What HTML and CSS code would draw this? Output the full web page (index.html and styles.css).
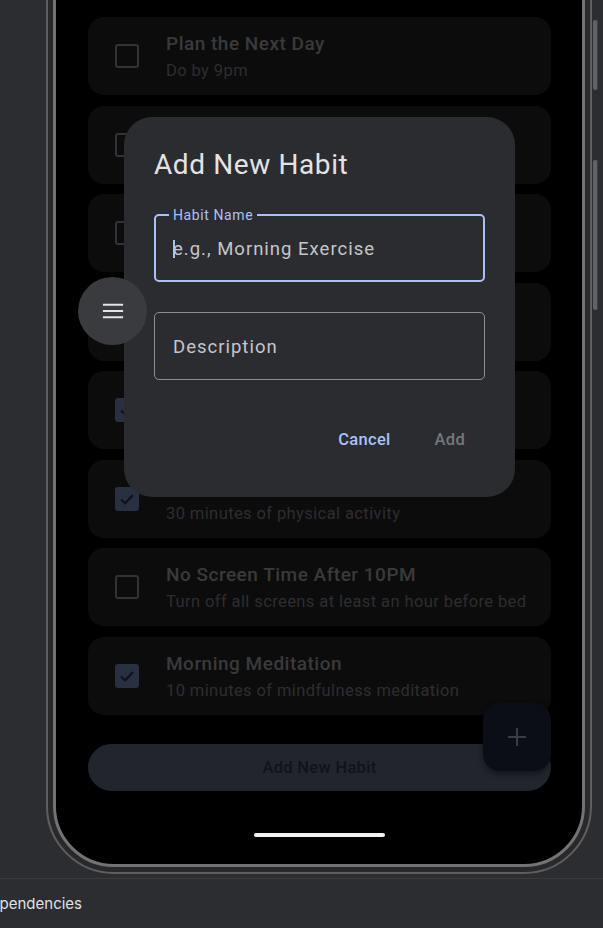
FILE: index.html
```html
<!DOCTYPE html>
<html lang="en">
<head>
<meta charset="utf-8">
<title>Add New Habit</title>
<link rel="stylesheet" href="styles.css">
</head>
<body>
<div class="ide">
  <div class="phone">
    <span class="side-btn side-btn-1"></span>
    <span class="side-btn side-btn-2"></span>
    <div class="bezel">
      <div class="screen">
        <ul class="habits">
          <li class="habit">
            <span class="check"></span>
            <div class="habit-text"><div class="habit-title">Plan the Next Day</div><div class="habit-desc">Do by 9pm</div></div>
          </li>
          <li class="habit">
            <span class="check"></span>
            <div class="habit-text"><div class="habit-title">Drink Water</div><div class="habit-desc">8 glasses throughout the day</div></div>
          </li>
          <li class="habit">
            <span class="check"></span>
            <div class="habit-text"><div class="habit-title">Read a Book</div><div class="habit-desc">Read at least 20 pages</div></div>
          </li>
          <li class="habit">
            <span class="check"></span>
            <div class="habit-text"><div class="habit-title">Journal</div><div class="habit-desc">Write down three good things</div></div>
          </li>
          <li class="habit">
            <span class="check checked"><svg viewBox="0 0 24 24" width="24" height="24"><path d="M6 12.5l4 4 8-8.5" fill="none" stroke="#0e121b" stroke-width="2.2"/></svg></span>
            <div class="habit-text"><div class="habit-title">Healthy Breakfast</div><div class="habit-desc">Start the day with a good meal</div></div>
          </li>
          <li class="habit">
            <span class="check checked"><svg viewBox="0 0 24 24" width="24" height="24"><path d="M6 12.5l4 4 8-8.5" fill="none" stroke="#0e121b" stroke-width="2.2"/></svg></span>
            <div class="habit-text"><div class="habit-title">Exercise</div><div class="habit-desc">30 minutes of physical activity</div></div>
          </li>
          <li class="habit">
            <span class="check"></span>
            <div class="habit-text"><div class="habit-title">No Screen Time After 10PM</div><div class="habit-desc">Turn off all screens at least an hour before bed</div></div>
          </li>
          <li class="habit">
            <span class="check checked"><svg viewBox="0 0 24 24" width="24" height="24"><path d="M6 12.5l4 4 8-8.5" fill="none" stroke="#0e121b" stroke-width="2.2"/></svg></span>
            <div class="habit-text"><div class="habit-title">Morning Meditation</div><div class="habit-desc">10 minutes of mindfulness meditation</div></div>
          </li>
        </ul>
        <button class="add-btn">Add New Habit</button>
        <div class="home-bar"></div>
      </div>

      <button class="fab" aria-label="Add">
        <svg viewBox="0 0 24 24" width="24" height="24"><path d="M12 3v18M3 12h18" fill="none" stroke="#3a3d45" stroke-width="2"/></svg>
      </button>

      <div class="dialog">
        <div class="dialog-title">Add New Habit</div>
        <div class="field field-focused">
          <span class="field-label">Habit Name</span>
          <span class="cursor"></span>
          <span class="field-text">e.g., Morning Exercise</span>
        </div>
        <div class="field field-idle">
          <span class="field-text">Description</span>
        </div>
        <div class="dialog-actions">
          <button class="text-btn btn-cancel">Cancel</button>
          <button class="text-btn btn-add">Add</button>
        </div>
      </div>

      <button class="menu-btn" aria-label="Menu">
        <svg viewBox="0 0 24 24" width="24" height="24"><path d="M1 5.3h22M1 12h22M1 18.7h22" fill="none" stroke="#e4e4e6" stroke-width="2.2"/></svg>
      </button>
    </div>
  </div>
</div>
<div class="statusbar"><span class="tab-label">Dependencies</span></div>
</body>
</html>
```

FILE: styles.css
```css
html, body {
  margin: 0;
  padding: 0;
}
body {
  width: 603px;
  height: 928px;
  overflow: hidden;
  background: #2b2d30;
  font-family: Roboto, "Noto Sans", sans-serif;
}

.ide {
  height: 878px;
  display: flex;
  align-items: flex-start;
  overflow: hidden;
  background: #2b2d30;
}

.phone {
  flex: none;
  position: relative;
  margin-left: 46px;
  margin-top: -40px;
  width: 546px;
  height: 914px;
  box-sizing: border-box;
  border: 2px solid #5e5e60;
  padding: 5px;
  background: #29292b;
  border-radius: 0 0 68px 68px;
}

.side-btn {
  position: absolute;
  right: -8px;
  width: 5px;
  background: #626264;
  border-radius: 2px;
  box-shadow: inset -1px 0 0 #404042;
}
.side-btn-1 { top: 58px; height: 70px; }
.side-btn-2 { top: 198px; height: 150px; }

.bezel {
  position: relative;
  height: 100%;
  box-sizing: border-box;
  border: 3px solid #737376;
  background: #000;
  border-radius: 0 0 61px 61px;
}

.screen {
  padding: 47px 31px 0 32px;
}

.habits {
  list-style: none;
  margin: 0;
  padding: 0;
  display: flex;
  flex-direction: column;
  gap: 10.5px;
}

.habit {
  height: 78px;
  box-sizing: border-box;
  background: #0c0c0d;
  border-radius: 16px;
  display: flex;
  align-items: center;
  padding-left: 27px;
  gap: 27px;
}

.check {
  flex: none;
  width: 24px;
  height: 24px;
  box-sizing: border-box;
  border: 2px solid #333336;
  border-radius: 3px;
  display: flex;
  align-items: center;
  justify-content: center;
}
.check.checked {
  border: none;
  background: #293041;
}
.check svg { display: block; }

.habit-text {
  display: flex;
  flex-direction: column;
  padding-top: 2px;
}
.habit-title {
  font-size: 19px;
  font-weight: 500;
  line-height: 28px;
  letter-spacing: 0.5px;
  color: #3a3a3c;
}
.habit-desc {
  font-size: 16.5px;
  line-height: 26px;
  letter-spacing: 0.4px;
  color: #2e2e30;
}

.add-btn {
  display: block;
  width: 100%;
  height: 47px;
  margin-top: 29.5px;
  border: none;
  border-radius: 24px;
  background: #22252d;
  color: #10131a;
  font-family: Roboto, sans-serif;
  font-size: 16.5px;
  font-weight: 500;
  letter-spacing: 0.3px;
}

.home-bar {
  width: 131px;
  height: 4px;
  margin: 42px auto 0;
  background: #f2f2f2;
  border-radius: 2px;
}

.fab {
  position: absolute;
  left: 427px;
  top: 733px;
  width: 68px;
  height: 68px;
  border: none;
  border-radius: 17px;
  background: #0b0e16;
  box-shadow: 0 3px 6px rgba(0, 0, 0, 0.45);
  display: flex;
  align-items: center;
  justify-content: center;
  padding: 0;
}

.dialog {
  position: absolute;
  left: 68px;
  top: 147px;
  width: 391px;
  box-sizing: border-box;
  padding: 32px 30px 38px;
  background: #2b2c30;
  border-radius: 28px;
}

.dialog-title {
  font-size: 28px;
  line-height: 32px;
  letter-spacing: 0.6px;
  color: #e3e3e6;
  margin-bottom: 33px;
}

.field {
  position: relative;
  height: 68px;
  box-sizing: border-box;
  border-radius: 5px;
  display: flex;
  align-items: center;
}
.field-focused {
  border: 2px solid #a9c1f4;
  padding-left: 17px;
}
.field-idle {
  border: 1px solid #8c8e94;
  padding-left: 18px;
  margin-top: 30px;
}

.field-label {
  position: absolute;
  top: -9px;
  left: 13px;
  padding: 0 4px;
  background: #2b2c30;
  font-size: 14px;
  line-height: 16px;
  letter-spacing: 0.6px;
  color: #a9c1f4;
}

.cursor {
  position: absolute;
  left: 17px;
  top: 24px;
  width: 2px;
  height: 18px;
  background: #a9c1f4;
}

.field-text {
  font-size: 18.5px;
  line-height: 24px;
  padding-top: 1px;
  letter-spacing: 1px;
  color: #c5c6cb;
}

.dialog-actions {
  margin-top: 39px;
  height: 40px;
  display: flex;
  justify-content: flex-end;
  gap: 4px;
}
.text-btn {
  border: none;
  background: none;
  padding: 0 20px;
  font-family: Roboto, sans-serif;
  font-size: 16.5px;
  font-weight: 500;
  letter-spacing: 0.3px;
}
.btn-cancel { color: #a9c3f8; }
.btn-add { color: #76787d; }

.menu-btn {
  position: absolute;
  left: 22px;
  top: 307px;
  width: 69px;
  height: 68px;
  border: none;
  border-radius: 50%;
  background: #3a3b3f;
  display: flex;
  align-items: center;
  justify-content: center;
  padding: 0;
}
.menu-btn svg { width: 22px; height: 22px; }

.statusbar {
  height: 50px;
  box-sizing: border-box;
  border-top: 1px solid #393b40;
  background: #2b2d30;
  display: flex;
  align-items: center;
  overflow: hidden;
}
.tab-label {
  margin-left: -20px;
  font-family: Inter, "Noto Sans", sans-serif;
  font-size: 15px;
  color: #dfe1e5;
  white-space: nowrap;
}
```
